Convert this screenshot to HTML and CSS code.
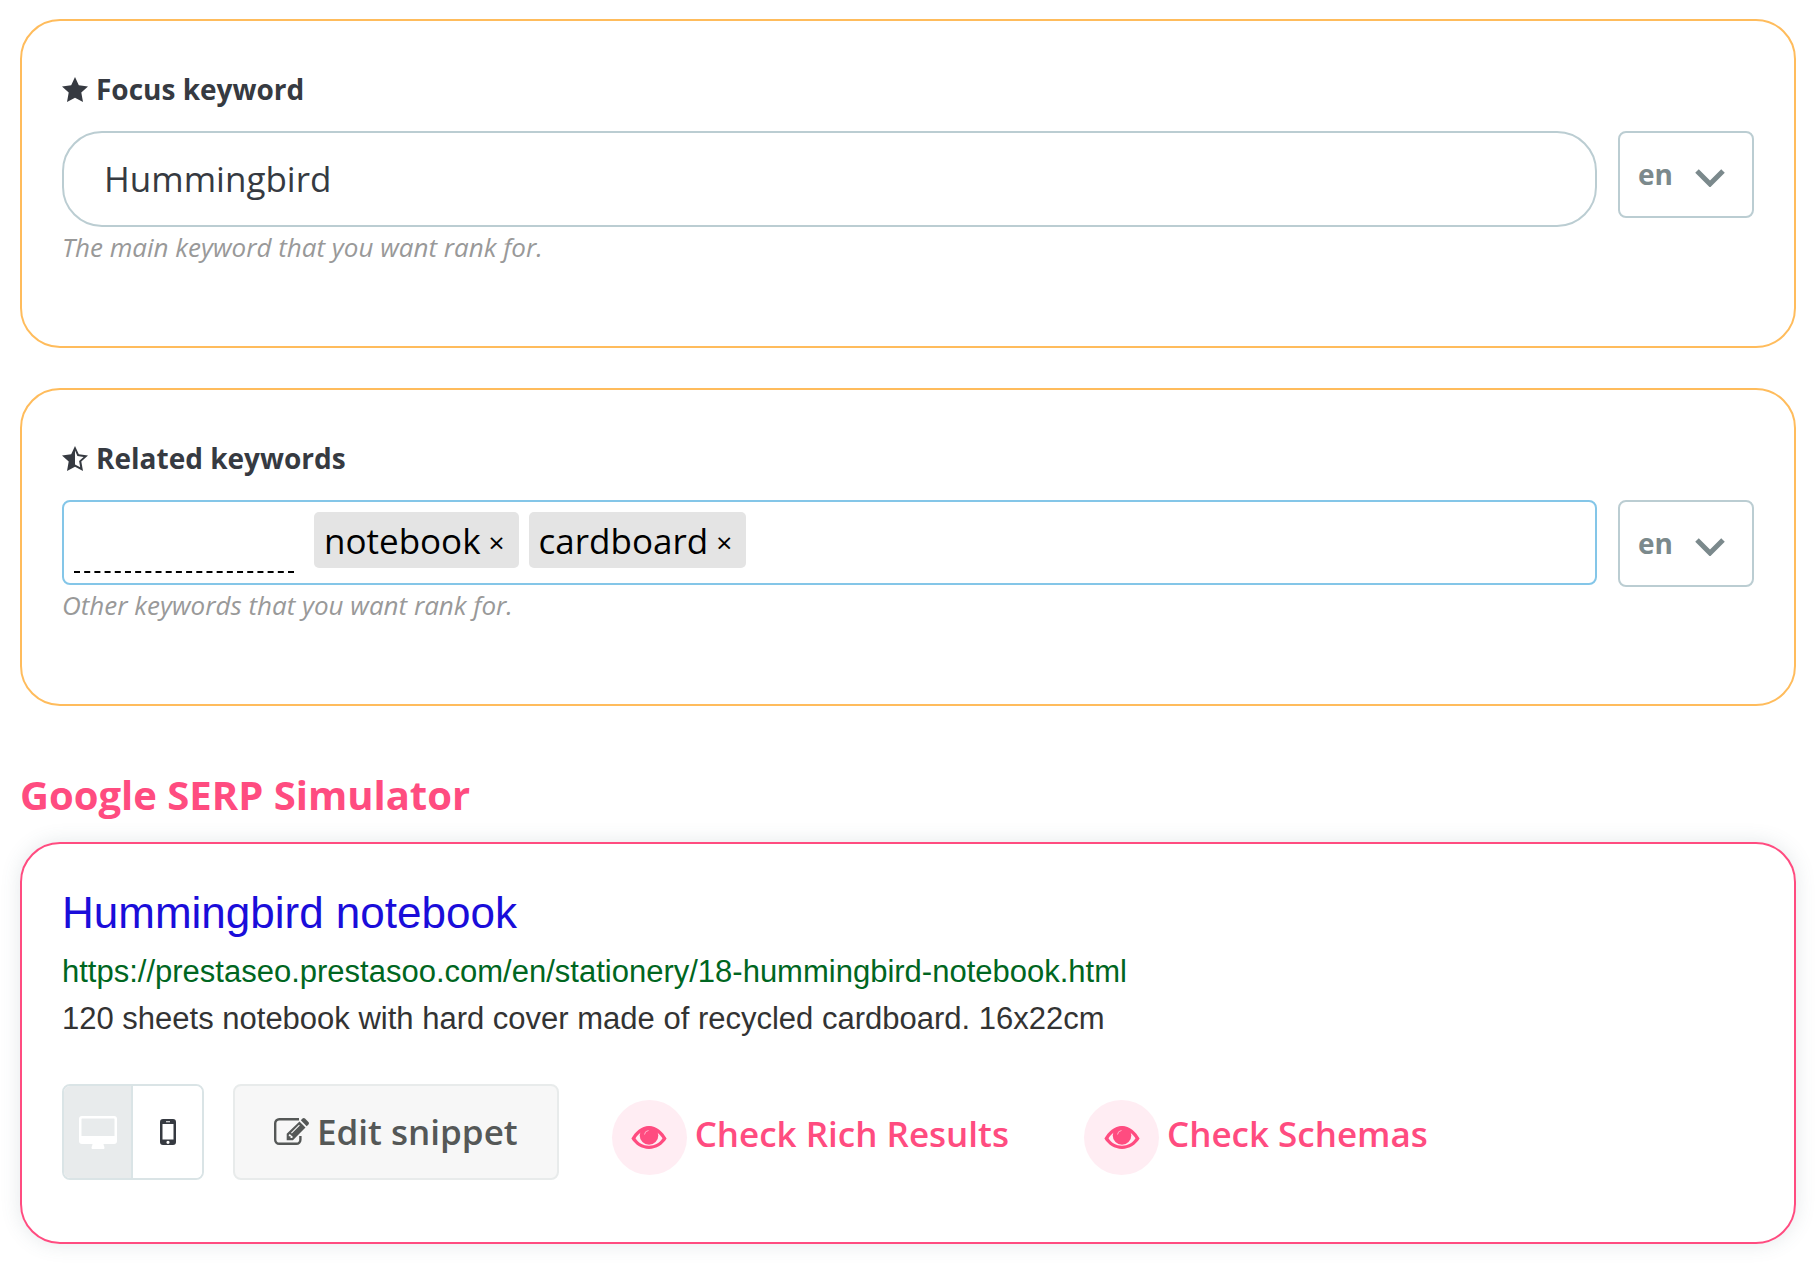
FILE: index.html
```
<!DOCTYPE html>
<html lang="en">
<head>
    <meta charset="UTF-8">
    <meta name="viewport" content="width=device-width, initial-scale=1.0">
    <title>SEO settings</title>
    <link rel="stylesheet" href="styles.css">
</head>
<body>
    <!-- Focus keyword -->
    <section class="card">
        <label class="card-label" for="focusKeyword">
            <svg class="label-icon" viewBox="0 0 26 25" aria-hidden="true"><path d="M13 0l3.800 8.200 9.200 1.300-6.700 6.100 1.700 9.400-8-4.300L5 25l1.700-9.400L0 9.500l9.200-1.300z"/></svg>
            Focus keyword
        </label>
        <div class="field-row">
            <div class="field">
                <input class="keyword-input" type="text" id="focusKeyword" value="Hummingbird">
                <p class="help">The main keyword that you want rank for.</p>
            </div>
            <div class="lang">
                <select class="lang-select" aria-label="Focus keyword language">
                    <option>en</option>
                </select>
                <svg class="lang-arrow" viewBox="0 0 30 18" aria-hidden="true"><path d="M2 2l13 13L28 2"/></svg>
            </div>
        </div>
    </section>

    <!-- Related keywords -->
    <section class="card">
        <label class="card-label" for="relatedKeywords">
            <svg class="label-icon" viewBox="0 0 26 25" aria-hidden="true"><path fill-rule="evenodd" d="M13 0l3.800 8.200 9.200 1.300-6.700 6.100 1.700 9.400-8-4.300L5 25l1.700-9.400L0 9.500l9.200-1.300zM13 4.500v14l5.200 2.700-1.100-6.300 4.500-4-6.200-1z"/></svg>
            Related keywords
        </label>
        <div class="field-row">
            <div class="field">
                <div class="tag-box">
                    <input class="tag-input" type="text" id="relatedKeywords">
                    <span class="tag">notebook<button class="tag-remove" type="button" aria-label="Remove notebook">×</button></span>
                    <span class="tag">cardboard<button class="tag-remove" type="button" aria-label="Remove cardboard">×</button></span>
                </div>
                <p class="help">Other keywords that you want rank for.</p>
            </div>
            <div class="lang">
                <select class="lang-select" aria-label="Related keywords language">
                    <option>en</option>
                </select>
                <svg class="lang-arrow" viewBox="0 0 30 18" aria-hidden="true"><path d="M2 2l13 13L28 2"/></svg>
            </div>
        </div>
    </section>

    <!-- Search result preview -->
    <h2 class="serp-heading">Google SERP Simulator</h2>
    <section class="card serp">
        <a class="serp-title" href="#">Hummingbird notebook</a>
        <p class="serp-url">https://prestaseo.prestasoo.com/en/stationery/18-hummingbird-notebook.html</p>
        <p class="serp-text">120 sheets notebook with hard cover made of recycled cardboard. 16x22cm</p>

        <div class="actions">
            <div class="device-toggle">
                <button class="device active" type="button" aria-label="Desktop" aria-pressed="true">
                    <svg class="icon-desktop" viewBox="0 0 38 33" aria-hidden="true"><path fill-rule="evenodd" d="M3 0h32a3 3 0 0 1 3 3v22a3 3 0 0 1-3 3H24.500c0 1.500 1 2.500 1 4a1 1 0 0 1-1 1h-11a1 1 0 0 1-1-1c0-1.500 1-2.500 1-4H3a3 3 0 0 1-3-3V3a3 3 0 0 1 3-3zM3 2.500a1 1 0 0 0-.5.5v17h33V3a1 1 0 0 0-.5-.5z"/></svg>
                </button>
                <button class="device" type="button" aria-label="Mobile" aria-pressed="false">
                    <svg class="icon-mobile" viewBox="0 0 16 26" aria-hidden="true"><path fill-rule="evenodd" d="M3 0h10a3 3 0 0 1 3 3v20a3 3 0 0 1-3 3H3a3 3 0 0 1-3-3V3a3 3 0 0 1 3-3zM2.500 5v15.500h11V5zM6 2.200v1h4v-1zM8 21.700a1.600 1.600 0 1 0 0 3.200 1.600 1.600 0 1 0 0-3.200z"/></svg>
                </button>
            </div>
            <button class="edit-btn" type="button">
                <svg class="icon-edit" viewBox="0 0 35 27" aria-hidden="true">
                    <path class="edit-box" d="M25 1.200H5.200a4 4 0 0 0-4 4v16.600a4 4 0 0 0 4 4h17.200a4 4 0 0 0 4-4V18"/>
                    <path fill-rule="evenodd" d="M12.700 22.300v-6.500L25.500 3.500l6 6-12.600 12.800zM14.800 17v1.300h1.700v1.800H18l1-1-3.200-3.200zM25 6.700l-8 8 .8.800 8-8z"/>
                    <path d="M26.800 2.300L28.500.6a1.800 1.800 0 0 1 2.500 0l3.400 3.400a1.800 1.800 0 0 1 0 2.500l-1.700 1.700z"/>
                </svg>
                Edit snippet
            </button>
            <a class="check-link" href="#">
                <span class="eye-badge"><svg class="icon-eye" viewBox="0 0 36 23" aria-hidden="true"><path fill-rule="evenodd" d="M.4 12.600C4 6 10.500 0 18 0s14 6 17.600 12.600C32 18.500 25.500 23 18 23S4 18.500.4 12.600zM4.500 12.300C7.500 17 12 19.800 18 19.800s10.500-2.800 13.500-7.500C29 8.500 24 3.500 18 3.500S7 8.500 4.500 12.300z"/><circle cx="18" cy="9.500" r="9.300"/><path class="eye-shine" d="M13.500 8.500a4.500 4.500 0 0 1 4-4"/></svg></span>
                Check Rich Results
            </a>
            <a class="check-link" href="#">
                <span class="eye-badge"><svg class="icon-eye" viewBox="0 0 36 23" aria-hidden="true"><path fill-rule="evenodd" d="M.4 12.600C4 6 10.500 0 18 0s14 6 17.600 12.600C32 18.500 25.500 23 18 23S4 18.500.4 12.600zM4.500 12.300C7.500 17 12 19.800 18 19.800s10.500-2.800 13.500-7.500C29 8.500 24 3.500 18 3.500S7 8.500 4.500 12.300z"/><circle cx="18" cy="9.500" r="9.300"/><path class="eye-shine" d="M13.500 8.500a4.500 4.500 0 0 1 4-4"/></svg></span>
                Check Schemas
            </a>
        </div>
    </section>
</body>
</html>
```
FILE: styles.css
```
* {
    box-sizing: border-box;
}

body {
    margin: 0;
    padding: 19px 20px 28px;
    background-color: #fff;
    color: #363a41;
    font-family: "Open Sans", sans-serif;
    font-size: 28px;
}

p {
    margin: 0;
}

svg {
    fill: currentColor;
    flex: none;
}

.card {
    padding: 48px 40px 80px;
    border: 2px solid #ffbc5c;
    border-radius: 40px;
    margin-bottom: 40px;
}

.card-label {
    display: flex;
    align-items: center;
    gap: 8px;
    line-height: 40px;
    margin-bottom: 22px;
    font-weight: 700;
}

.label-icon {
    width: 26px;
    height: 25px;
}

.field-row {
    display: flex;
    align-items: flex-start;
    gap: 21px;
}

.field {
    flex: 1;
}

.keyword-input {
    display: block;
    width: 100%;
    height: 96px;
    padding: 0 40px 2px;
    border: 2px solid #bbcdd2;
    border-radius: 40px;
    background-color: #fff;
    color: #363a41;
    font-family: inherit;
    font-size: 35px;
}

.help {
    margin-top: 1px;
    line-height: 38px;
    color: #999;
    font-size: 26px;
    font-style: italic;
}

/* Language drop-down */
.lang {
    position: relative;
}

.lang-select {
    display: block;
    width: 136px;
    height: 87px;
    padding: 0 18px 2px;
    border: 2px solid #bbcdd2;
    border-radius: 8px;
    background-color: #fff;
    color: #7b898c;
    font-family: inherit;
    font-size: 28px;
    font-weight: 700;
    appearance: none;
}

.lang-arrow {
    position: absolute;
    top: 38px;
    right: 29px;
    width: 30px;
    height: 18px;
    fill: none;
    stroke: #7b898c;
    stroke-width: 5;
    pointer-events: none;
}

/* Tags */
.tag-box {
    display: flex;
    align-items: flex-start;
    gap: 10px;
    height: 85px;
    padding: 10px;
    border: 2px solid #84c6e8;
    border-radius: 8px;
}

.tag-input {
    width: 220px;
    height: 61px;
    margin-right: 10px;
    padding: 0;
    border: 0;
    border-bottom: 2px dashed #000;
    background: none;
    font-family: inherit;
    font-size: 35px;
}

.tag {
    display: flex;
    align-items: center;
    height: 56px;
    padding: 0 10px;
    border-radius: 5px;
    background-color: #e4e4e4;
    color: #000;
    font-size: 35px;
}

.tag-remove {
    padding: 4px 4px 0 8px;
    border: 0;
    background: none;
    color: #000;
    font-family: inherit;
    font-size: 28px;
}

/* SERP simulator */
.serp-heading {
    margin: 63px 0 21px;
    line-height: 52px;
    color: #ff4c80;
    font-size: 40px;
    font-weight: 700;
}

.serp {
    margin-bottom: 0;
    padding: 41px 40px 62px;
    border-color: #ff4c80;
    box-shadow: 0 0 20px rgba(76, 98, 114, 0.15);
    font-family: "Liberation Sans", Arial, sans-serif;
}

.serp-title {
    display: block;
    line-height: 56px;
    color: #1a0dda;
    font-size: 44px;
    text-decoration: none;
}

.serp-url {
    margin-top: 7px;
    line-height: 47px;
    color: #006621;
    font-size: 31px;
}

.serp-text {
    line-height: 47px;
    color: #333;
    font-size: 31px;
}

.actions {
    display: flex;
    align-items: center;
    margin-top: 42px;
    font-family: "Open Sans", sans-serif;
}

.device-toggle {
    display: flex;
    height: 96px;
    margin-right: 29px;
    border: 2px solid #dae4e6;
    border-radius: 8px;
    overflow: hidden;
}

.device {
    display: flex;
    align-items: center;
    justify-content: center;
    width: 69px;
    padding: 0;
    border: 0;
    background-color: #fff;
    color: #363a41;
}

.device.active {
    border-right: 2px solid #dae4e6;
    background-color: #e8ebec;
    color: #fff;
}

.icon-desktop {
    width: 38px;
    height: 33px;
}

.icon-mobile {
    width: 16px;
    height: 26px;
}

.edit-btn {
    display: flex;
    align-items: center;
    gap: 8px;
    height: 96px;
    margin-right: 53px;
    padding: 0 39px 2px;
    border: 2px solid #e8ebeb;
    border-radius: 8px;
    background-color: #f7f7f7;
    color: #555857;
    font-family: inherit;
    font-size: 35px;
    font-weight: 600;
}

.icon-edit {
    width: 35px;
    height: 27px;
}

.edit-box {
    fill: none;
    stroke: currentColor;
    stroke-width: 2.4;
}

.check-link {
    display: flex;
    align-items: flex-start;
    gap: 8px;
    margin-right: 75px;
    padding-top: 11px;
    color: #ff4c80;
    font-size: 35px;
    font-weight: 600;
    line-height: 68px;
    text-decoration: none;
}

.eye-badge {
    display: flex;
    align-items: center;
    justify-content: center;
    width: 75px;
    height: 75px;
    border-radius: 50%;
    background-color: #ffedf3;
}

.icon-eye {
    width: 36px;
    height: 23px;
}

.eye-shine {
    fill: none;
    stroke: #ffb3cb;
    stroke-width: 1;
}
```
